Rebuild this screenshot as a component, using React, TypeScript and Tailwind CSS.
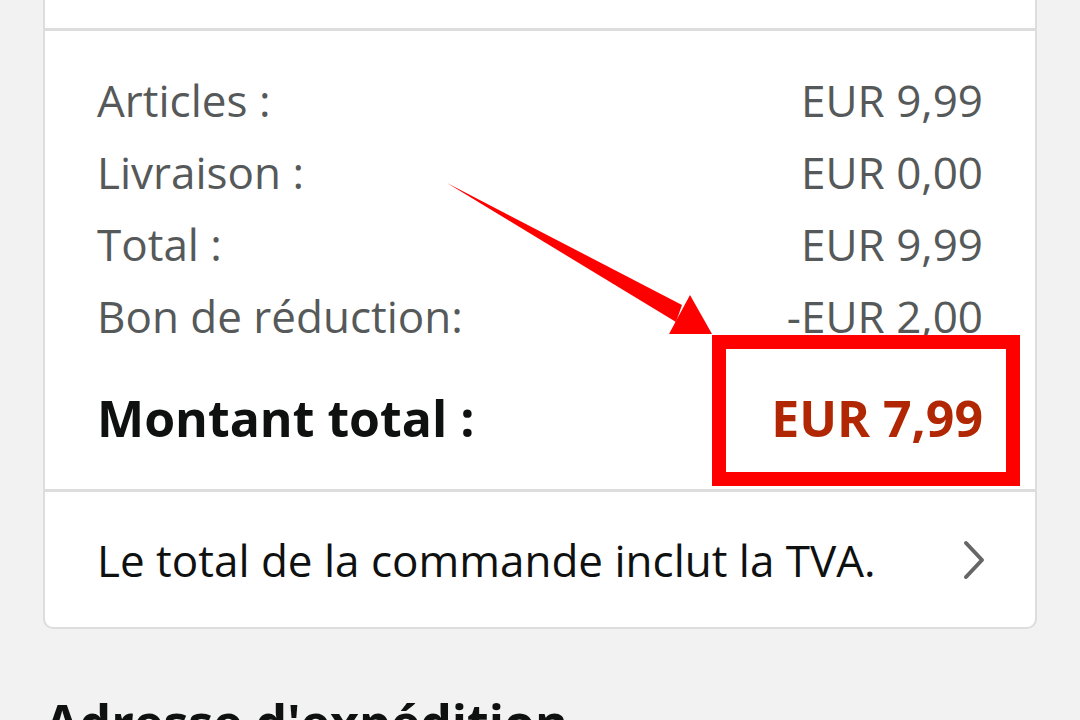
const rows = [
  { label: "Articles :", value: "EUR 9,99" },
  { label: "Livraison :", value: "EUR 0,00" },
  { label: "Total :", value: "EUR 9,99" },
  { label: "Bon de réduction:", value: "-EUR 2,00" },
];

export default function App() {
  return (
    <div className="relative min-h-[720px] h-[720px] overflow-hidden bg-[#f2f2f2] font-['Open_Sans',sans-serif]">
      <div className="ml-[43px] mr-[43px] bg-white border-x-2 border-b-2 border-[#dddddd] rounded-b-[10px]">
        {/* top of the card, continues above the fold */}
        <div className="h-[31px] border-b-[3px] border-[#dddddd]" />

        {/* order summary */}
        <div className="pt-[33px] pb-[35px] px-[52px] border-b-[3px] border-[#dddddd]">
          {rows.map((r) => (
            <div key={r.label} className="flex justify-between items-center h-[72px] text-[44px] text-[#565959]">
              <span>{r.label}</span>
              <span>{r.value}</span>
            </div>
          ))}
          <div className="mt-[30px] flex justify-between items-center h-[72px] text-[50px] font-bold text-[#0f1111]">
            <span>Montant total :</span>
            <span className="text-[#b12704]">EUR 7,99</span>
          </div>
        </div>

        {/* VAT row */}
        <div className="flex items-center justify-between h-[135px] pl-[52px] pr-[48px]">
          <span className="text-[44px] text-[#0f1111]">Le total de la commande inclut la TVA.</span>
          <svg width="26" height="40" viewBox="0 0 26 40" fill="none" aria-hidden="true">
            <path d="M5 3 L21 20 L5 37" stroke="#666666" strokeWidth="4" strokeLinecap="round" strokeLinejoin="round" />
          </svg>
        </div>
      </div>

      <h2 className="mt-[68px] ml-[45px] text-[50px] font-bold text-[#0f1111] leading-none">Adresse d'expédition</h2>

      {/* annotation: arrow + highlight box */}
      <svg className="absolute inset-0 pointer-events-none" width="1080" height="720" viewBox="0 0 1080 720" aria-hidden="true">
        <polygon points="447,183 682,305 676,322" fill="#ff0000" />
        <polygon points="669,334 690,295 712,334" fill="#ff0000" />
      </svg>
      <div className="absolute left-[712px] top-[335px] w-[308px] h-[151px] border-[14px] border-[#ff0000] pointer-events-none" />
    </div>
  );
}
